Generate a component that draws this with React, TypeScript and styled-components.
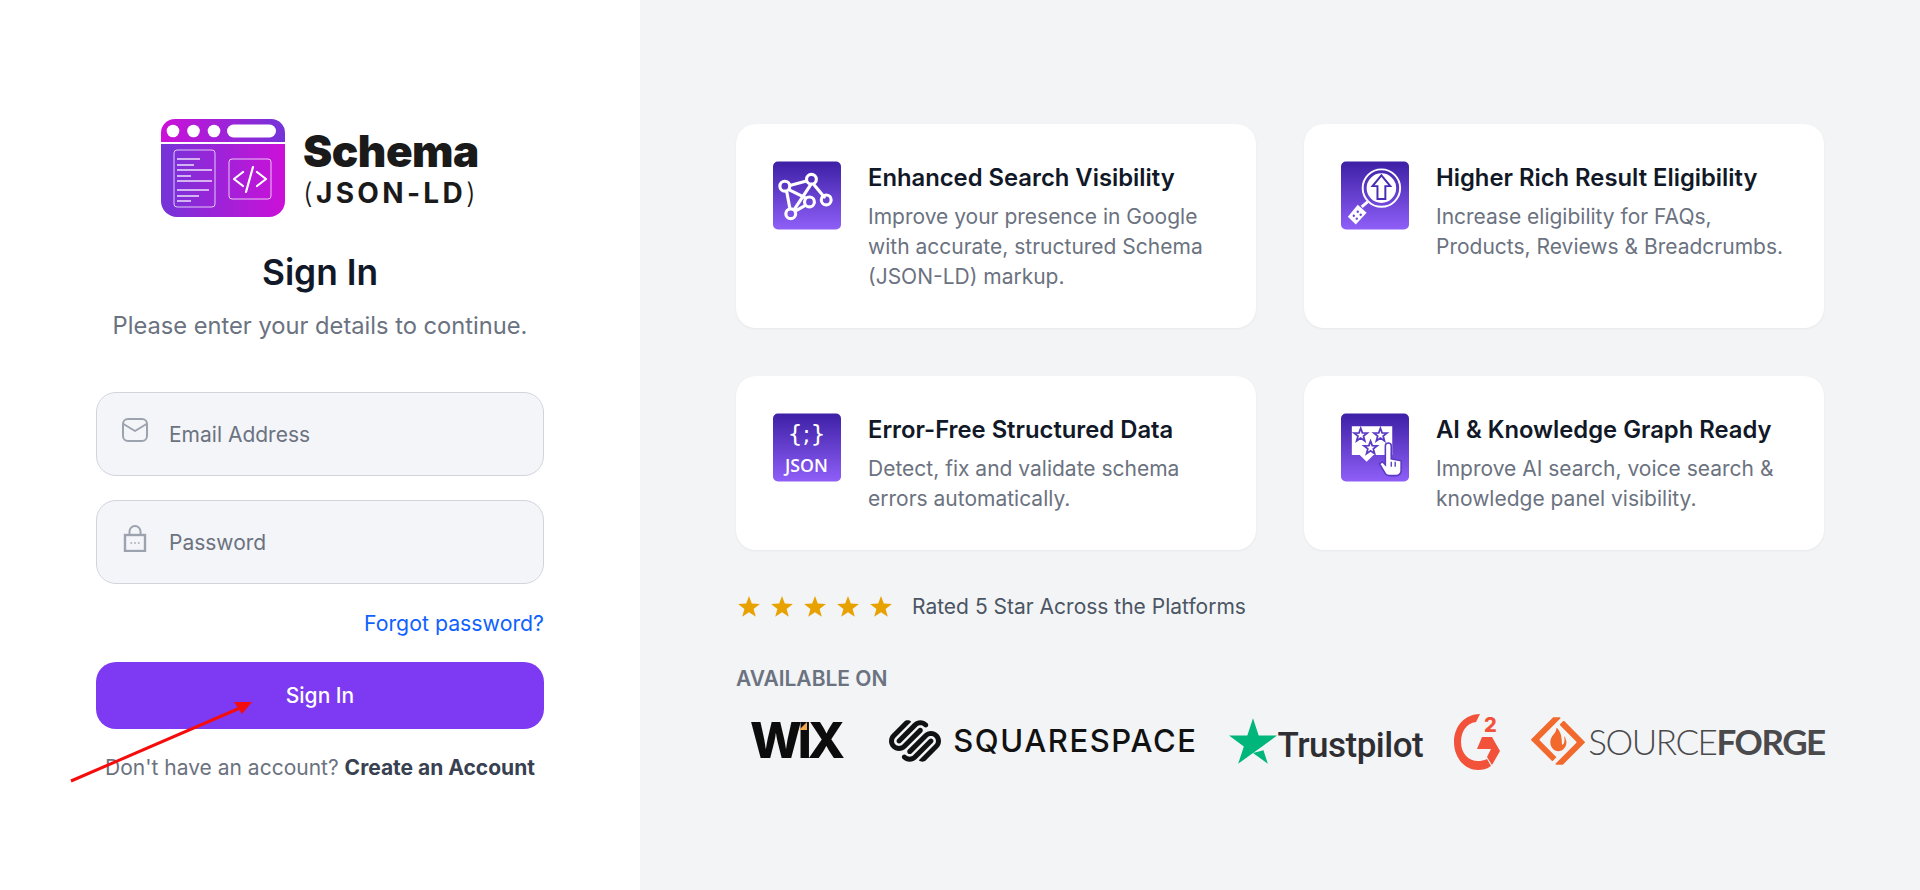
import React from 'react'
import styled, { createGlobalStyle } from 'styled-components'
import { SiSourceforge, SiSquarespace, SiTrustpilot } from 'react-icons/si'

const GlobalStyle = createGlobalStyle`
  html, body {
    margin: 0;
    padding: 0;
    background: #ffffff;
    font-family: Inter, 'Liberation Sans', sans-serif;
  }
  * {
    box-sizing: border-box;
  }
`

const Page = styled.div`
  position: relative;
  display: grid;
  grid-template-columns: 640px 1fr;
  min-height: 890px;
  overflow: hidden;
`

// left column
const FormPanel = styled.div`
  display: flex;
  flex-direction: column;
  align-items: stretch;
  padding: 118px 96px 0;
  background: #ffffff;
`
const Brand = styled.div`
  display: flex;
  align-items: center;
  justify-content: center;
  gap: 18px;
  height: 100px;
`
const BrandText = styled.div`
  display: flex;
  flex-direction: column;
  color: #1a1a1a;
`
const BrandName = styled.div`
  font-size: 44px;
  line-height: 46px;
  font-weight: 900;
  letter-spacing: -0.5px;
`
const BrandSub = styled.div`
  margin-top: 3px;
  font-size: 28px;
  line-height: 32px;
  font-weight: 700;
  letter-spacing: 3.3px;
  span {
    font-weight: 300;
  }
`
const Title = styled.h1`
  margin: 33px 0 0;
  text-align: center;
  font-size: 35.3px;
  line-height: 44px;
  font-weight: 600;
  color: #111827;
`
const Subtitle = styled.p`
  margin: 12px 0 0;
  text-align: center;
  font-size: 23.7px;
  line-height: 37px;
  color: #6b7280;
`
const Fields = styled.div`
  display: flex;
  flex-direction: column;
  gap: 24px;
  margin-top: 48px;
`
const Field = styled.label`
  display: flex;
  align-items: center;
  height: 84px;
  padding-left: 25px;
  border: 1px solid #d1d5db;
  border-radius: 20px;
  background: #f4f5f9;
  color: #9ca3af;
  svg {
    flex: none;
    margin-bottom: 9px;
  }
`
const FieldInput = styled.input`
  flex: 1;
  min-width: 0;
  margin-left: 19px;
  border: 0;
  outline: 0;
  background: transparent;
  font: 400 21px Inter, sans-serif;
  color: #111827;
  &::placeholder {
    color: #6b7280;
    opacity: 1;
  }
`
const ForgotRow = styled.div`
  margin-top: 25px;
  text-align: right;
`
const ForgotLink = styled.a`
  font-size: 21.3px;
  line-height: 28px;
  color: #0f62fe;
  text-decoration: none;
`
const SubmitButton = styled.button`
  width: 100%;
  height: 67px;
  margin-top: 25px;
  border: 0;
  border-radius: 20px;
  background: #7e3af2;
  color: #ffffff;
  font: 500 21px Inter, sans-serif;
`
const SignupLine = styled.p`
  margin: 25px 0 0;
  text-align: center;
  font-size: 21px;
  line-height: 28px;
  color: #6b7280;
  white-space: nowrap;
  b {
    font-weight: 700;
    color: #374151;
  }
`

// right column
const InfoPanel = styled.div`
  padding: 124px 96px 0;
  background: #f3f4f6;
`
const CardGrid = styled.div`
  display: grid;
  grid-template-columns: 520px 520px;
  grid-template-rows: 204px 174px;
  gap: 48px;
`
const Card = styled.div`
  display: flex;
  align-items: flex-start;
  gap: 27px;
  padding: 37px 30px 0 37px;
  border-radius: 20px;
  background: #ffffff;
  box-shadow: 0 1px 3px rgba(17, 24, 39, 0.05);
`
const CardBody = styled.div`
  min-width: 0;
  margin-top: 1px;
`
const CardTitle = styled.div`
  font-size: 23.8px;
  line-height: 32px;
  font-weight: 600;
  color: #111827;
`
const CardText = styled.div`
  margin-top: 8px;
  font-size: 21px;
  line-height: 30px;
  color: #6b7280;
`
const IconTile = styled.svg`
  flex: none;
  width: 68px;
  height: 69px;
`
const RatingRow = styled.div`
  display: flex;
  align-items: center;
  margin-top: 42px;
  height: 30px;
`
const Stars = styled.div`
  display: flex;
  gap: 11px;
  margin: 0 20px 0 2px;
`
const RatingText = styled.span`
  font-size: 21px;
  line-height: 30px;
  color: #4b5563;
`
const AvailableLabel = styled.div`
  margin-top: 43px;
  font-size: 21px;
  line-height: 28px;
  font-weight: 600;
  color: #6b7280;
`
const LogoRow = styled.div`
  display: flex;
  align-items: center;
  height: 60px;
  margin-top: 18px;
`
const LogoItem = styled.div<{ $gap?: number; $before?: number }>`
  display: flex;
  align-items: center;
  flex: none;
  gap: ${(p) => p.$gap ?? 0}px;
  margin-left: ${(p) => p.$before ?? 0}px;
`
const WixMark = styled.span`
  position: relative;
  font: 800 49px/50px Inter, sans-serif;
  letter-spacing: -4px;
  color: #0c0c0c;
`
const WixTip = styled.i`
  position: absolute;
  left: 49px;
  top: 6px;
  width: 8px;
  height: 8px;
  background: #f5a94a;
  clip-path: polygon(100% 0, 100% 100%, 0 100%);
`
const SquarespaceName = styled.span`
  font: 500 31px/40px Inter, sans-serif;
  letter-spacing: 1.6px;
  color: #111111;
`
const TrustpilotName = styled.span`
  font: 500 35px/40px Roboto, sans-serif;
  letter-spacing: -0.5px;
  color: #2f2f33;
  margin-top: 10px;
`
const ForgeName = styled.span`
  font: 300 35px/40px Lato, sans-serif;
  letter-spacing: -1.45px;
  color: #4a4a4d;
  b {
    font-weight: 700;
  }
`
const ArrowOverlay = styled.svg`
  position: absolute;
  left: 0;
  top: 0;
  width: 300px;
  height: 800px;
  pointer-events: none;
`

const TileBg = ({ id }: { id: string }) => (
  <>
    <defs>
      <linearGradient id={id} x1="0" y1="0" x2="0" y2="1">
        <stop offset="0" stopColor="#3d20a5" />
        <stop offset="1" stopColor="#8f5ff8" />
      </linearGradient>
    </defs>
    <rect x="0" y="0" width="69" height="69" rx="5" fill={`url(#${id})`} />
  </>
)

const GraphIcon = () => (
  <IconTile viewBox="0 0 69 69">
    <TileBg id="tile-a" />
    <g fill="none" stroke="#fff" strokeWidth="3.2" strokeLinecap="round">
      <path d="M18 24 L33 20 M42 24 L52 36 M14 31 L17 47 M38 24 L22 48 M17 29 L33 37 M23 50 L32 45" />
      <circle cx="12" cy="25" r="5" />
      <circle cx="39" cy="18" r="5" />
      <circle cx="37" cy="41" r="5" />
      <circle cx="54" cy="39" r="5" />
      <circle cx="18" cy="53" r="5" />
    </g>
  </IconTile>
)

const SearchUpIcon = () => (
  <IconTile viewBox="0 0 69 69">
    <TileBg id="tile-b" />
    <circle cx="41" cy="27" r="19" fill="none" stroke="#fff" strokeWidth="2" />
    <circle cx="41" cy="27" r="15" fill="#fff" />
    <path d="M41 14 L50 25 L45 25 L45 38 L37 38 L37 25 L32 25 Z" fill="#fff" stroke="#4a2cb5" strokeWidth="2" />
    <path d="M27 41 L21 46" stroke="#fff" strokeWidth="3" />
    <path d="M17 44 L26 52 L15 64 L7 56 Z" fill="#fff" />
    <g fill="#6d45d6">
      <circle cx="13" cy="55" r="1.2" />
      <circle cx="17" cy="51" r="1.2" />
      <circle cx="16" cy="58" r="1.2" />
      <circle cx="20" cy="54" r="1.2" />
    </g>
  </IconTile>
)

const JsonIcon = () => (
  <IconTile viewBox="0 0 69 69">
    <TileBg id="tile-c" />
    <text x="34" y="29" textAnchor="middle" fill="#fff" fontFamily="'DejaVu Sans', sans-serif" fontSize="24">{'{;}'}</text>
    <text x="34" y="59" textAnchor="middle" fill="#fff" fontFamily="'Open Sans', sans-serif" fontWeight="600" fontSize="18">JSON</text>
  </IconTile>
)

const starPath = (cx: number, cy: number, r: number) => {
  const pts: string[] = []
  for (let i = 0; i < 10; i++) {
    const rad = i % 2 === 0 ? r : r * 0.42
    const a = (Math.PI / 5) * i - Math.PI / 2
    pts.push(`${(cx + rad * Math.cos(a)).toFixed(1)} ${(cy + rad * Math.sin(a)).toFixed(1)}`)
  }
  return `M${pts.join(' L')} Z`
}

const ReviewIcon = () => (
  <IconTile viewBox="0 0 69 69">
    <TileBg id="tile-d" />
    <path d="M11 13 H52 V42 H33 L26 49 L19 42 H11 Z" fill="#fff" />
    <g fill="none" stroke="#5b3bc4" strokeWidth="1.8">
      <path d={starPath(20, 22, 7)} />
      <path d={starPath(40, 22, 7)} />
      <path d={starPath(30, 35, 7)} />
    </g>
    <path
      d="M45 33 a3 3 0 0 1 6 0 V46 l10 2 V58 a5 5 0 0 1 -5 5 H49 a5 5 0 0 1 -4 -2 L39 51 l3 -2 l3 3 Z"
      fill="#fff"
      stroke="#5b3bc4"
      strokeWidth="1.6"
    />
    <path d="M51 49 V54 M55 49 V54" stroke="#5b3bc4" strokeWidth="1.4" />
  </IconTile>
)

const BrandLogo = () => (
  <svg width="124" height="98" viewBox="0 0 124 98">
    <defs>
      <linearGradient id="bar" x1="0" x2="1" y1="0" y2="0">
        <stop offset="0" stopColor="#cc10d8" />
        <stop offset="1" stopColor="#7434d8" />
      </linearGradient>
      <linearGradient id="body" x1="0" x2="1" y1="0" y2="0">
        <stop offset="0" stopColor="#7434d8" />
        <stop offset="1" stopColor="#cc10d8" />
      </linearGradient>
    </defs>
    <path d="M0 23 V14 A14 14 0 0 1 14 0 H110 A14 14 0 0 1 124 14 V23 Z" fill="url(#bar)" />
    <path d="M0 25 H124 V82 A16 16 0 0 1 108 98 H16 A16 16 0 0 1 0 82 Z" fill="url(#body)" />
    <g fill="#fff">
      <circle cx="12" cy="12" r="6.3" />
      <circle cx="32.5" cy="12" r="6.3" />
      <circle cx="53" cy="12" r="6.3" />
      <rect x="66" y="5.5" width="49" height="13" rx="6.5" />
    </g>
    <g fill="none" stroke="#fff" strokeOpacity="0.75" strokeWidth="1">
      <rect x="13" y="31" width="41" height="57" rx="3" />
      <rect x="68" y="40" width="42" height="40" rx="3" />
    </g>
    <path
      d="M16 40 H39 M16 46 H33 M16 51 H51 M16 57 H30 M16 62 H51 M16 71 H48 M16 77 H38 M16 82 H30"
      stroke="#fff"
      strokeOpacity="0.85"
      strokeWidth="1.4"
      fill="none"
    />
    <path
      d="M82 53 L73 60 L82 67 M96 53 L105 60 L96 67 M92 48 L85 73"
      stroke="#fff"
      strokeWidth="2.2"
      fill="none"
      strokeLinecap="round"
      strokeLinejoin="round"
    />
  </svg>
)

const MailGlyph = () => (
  <svg width="26" height="24" viewBox="0 0 26 24" fill="none" stroke="currentColor" strokeWidth="2">
    <rect x="1" y="1" width="24" height="22" rx="5" />
    <path d="M1.5 6 L13 13 L24.5 6" strokeLinejoin="round" />
  </svg>
)

const LockGlyph = () => (
  <svg width="26" height="28" viewBox="0 0 26 28" fill="none" stroke="currentColor" strokeWidth="2.4">
    <rect x="3" y="11" width="20" height="16" />
    <path d="M7.5 11 V7.5 a5.5 5.5 0 0 1 11 0 V11" strokeWidth="2" />
    <path d="M8.5 19 h1.6 M12.2 19 h1.6 M15.9 19 h1.6" strokeWidth="1.6" />
  </svg>
)

const G2Mark = () => (
  <svg width="46" height="57" viewBox="0 0 46 57">
    <path
      d="M26 1 L22 9 C12 10 7 19 7 29 C7 41 15 48 24 48 C27 48 30 47.5 33 46 L37 53 C33 56 28 57 24 57 C10 57 0 44 0 29 C0 13 11 1 26 1 Z"
      fill="#f2513a"
    />
    <path d="M23 36 L28 24 H38 L46 38 L38 52 L33 44 L37 36 Z" fill="#f2513a" />
    <text x="30" y="19" fill="#f2513a" fontFamily="Inter, sans-serif" fontWeight="800" fontSize="20">2</text>
  </svg>
)

const cards = [
  {
    icon: <GraphIcon />,
    title: 'Enhanced Search Visibility',
    text: 'Improve your presence in Google with accurate, structured Schema (JSON-LD) markup.',
  },
  {
    icon: <SearchUpIcon />,
    title: 'Higher Rich Result Eligibility',
    text: 'Increase eligibility for FAQs, Products, Reviews & Breadcrumbs.',
  },
  {
    icon: <JsonIcon />,
    title: 'Error-Free Structured Data',
    text: 'Detect, fix and validate schema errors automatically.',
  },
  {
    icon: <ReviewIcon />,
    title: 'AI & Knowledge Graph Ready',
    text: 'Improve AI search, voice search & knowledge panel visibility.',
  },
]

const App = () => {
  return (
    <Page>
      <GlobalStyle />
      <FormPanel>
        <Brand>
          <BrandLogo />
          <BrandText>
            <BrandName>Schema</BrandName>
            <BrandSub>
              <span>(</span>JSON-LD<span>)</span>
            </BrandSub>
          </BrandText>
        </Brand>
        <Title>Sign In</Title>
        <Subtitle>Please enter your details to continue.</Subtitle>
        <Fields>
          <Field>
            <MailGlyph />
            <FieldInput placeholder="Email Address" />
          </Field>
          <Field>
            <LockGlyph />
            <FieldInput placeholder="Password" />
          </Field>
        </Fields>
        <ForgotRow>
          <ForgotLink href="#">Forgot password?</ForgotLink>
        </ForgotRow>
        <SubmitButton>Sign In</SubmitButton>
        <SignupLine>
          Don't have an account? <b>Create an Account</b>
        </SignupLine>
      </FormPanel>
      <InfoPanel>
        <CardGrid>
          {cards.map((c) => (
            <Card key={c.title}>
              {c.icon}
              <CardBody>
                <CardTitle>{c.title}</CardTitle>
                <CardText>{c.text}</CardText>
              </CardBody>
            </Card>
          ))}
        </CardGrid>
        <RatingRow>
          <Stars>
            {[0, 1, 2, 3, 4].map((i) => (
              <svg key={i} width="22" height="22" viewBox="0 0 22 22">
                <path d={starPath(11, 11.5, 11.5)} fill="#e8a200" />
              </svg>
            ))}
          </Stars>
          <RatingText>Rated 5 Star Across the Platforms</RatingText>
        </RatingRow>
        <AvailableLabel>AVAILABLE ON</AvailableLabel>
        <LogoRow>
          <LogoItem $before={14}>
            <WixMark>
              WIX
              <WixTip />
            </WixMark>
          </LogoItem>
          <LogoItem $gap={12} $before={48}>
            <SiSquarespace size={52} color="#111111" />
            <SquarespaceName>SQUARESPACE</SquarespaceName>
          </LogoItem>
          <LogoItem $gap={1} $before={31}>
            <SiTrustpilot size={48} color="#00b67a" />
            <TrustpilotName>Trustpilot</TrustpilotName>
          </LogoItem>
          <LogoItem $before={31}>
            <G2Mark />
          </LogoItem>
          <LogoItem $gap={3} $before={31}>
            <SiSourceforge size={54} color="#f1692c" />
            <ForgeName>
              SOURCE<b>FORGE</b>
            </ForgeName>
          </LogoItem>
        </LogoRow>
      </InfoPanel>
      <ArrowOverlay viewBox="0 0 300 800">
        <path d="M71 781 L240 708" stroke="#f50d0d" strokeWidth="3" />
        <path d="M252 702 L234 702 L242 714 Z" fill="#f50d0d" />
      </ArrowOverlay>
    </Page>
  )
}

export default App
